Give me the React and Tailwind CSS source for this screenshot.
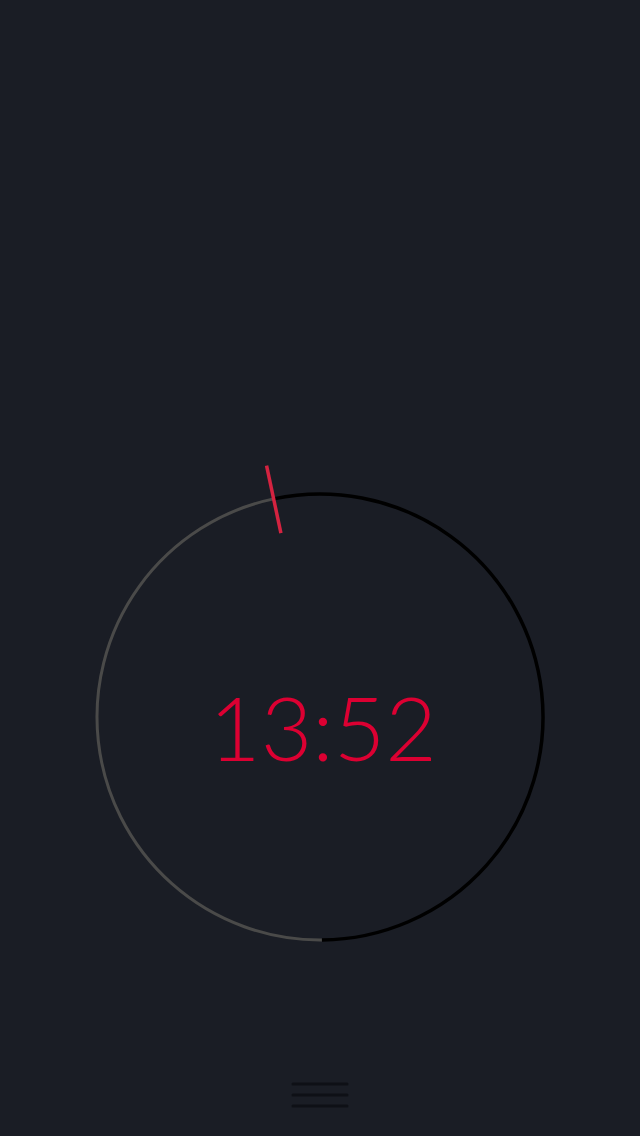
import React from 'react';

const CX = 280;
const CY = 280;
const R = 223;

const point = (deg, r) => {
  const a = (deg * Math.PI) / 180;
  return [CX + r * Math.sin(a), CY - r * Math.cos(a)];
};

const Dial = ({ handAngle }) => {
  const [hx, hy] = point(handAngle, R);
  const [bx, by] = point(179.5, R);
  const [t1x, t1y] = point(handAngle, 188);
  const [t2x, t2y] = point(handAngle, 257);

  return (
    <svg width="560" height="560" viewBox="0 0 560 560" className="block">
      {/* elapsed part */}
      <path
        d={`M ${bx} ${by} A ${R} ${R} 0 0 1 ${hx} ${hy}`}
        fill="none"
        stroke="#4a4a49"
        strokeWidth="3"
      />
      {/* remaining part */}
      <path
        d={`M ${hx} ${hy} A ${R} ${R} 0 1 1 ${bx} ${by}`}
        fill="none"
        stroke="#000000"
        strokeWidth="3.5"
      />
      <line x1={t1x} y1={t1y} x2={t2x} y2={t2y} stroke="#d42340" strokeWidth="3.5" />
    </svg>
  );
};

const MenuIcon = () => (
  <svg width="58" height="28" viewBox="0 0 58 28">
    <line x1="2" y1="2" x2="56" y2="2" stroke="#0e1016" strokeWidth="3" strokeLinecap="round" />
    <line x1="2" y1="13" x2="56" y2="13" stroke="#0e1016" strokeWidth="3" strokeLinecap="round" />
    <line x1="2" y1="24" x2="56" y2="24" stroke="#0e1016" strokeWidth="3" strokeLinecap="round" />
  </svg>
);

export default function App() {
  return (
    <div className="h-[1136px] w-full bg-[#1a1d25] flex flex-col items-center overflow-hidden">
      <div className="relative mt-[437px] w-[560px] h-[560px]">
        <Dial handAngle={-12} />
        <div
          className="absolute left-0 right-0 top-[245px] text-center text-[89px] leading-none font-light text-[#dc0032] pl-[6px]"
          style={{ fontFamily: 'Lato, "Noto Sans", sans-serif' }}
        >
          13:52
        </div>
      </div>
      <button type="button" className="mt-[85px] block">
        <MenuIcon />
      </button>
    </div>
  );
}
